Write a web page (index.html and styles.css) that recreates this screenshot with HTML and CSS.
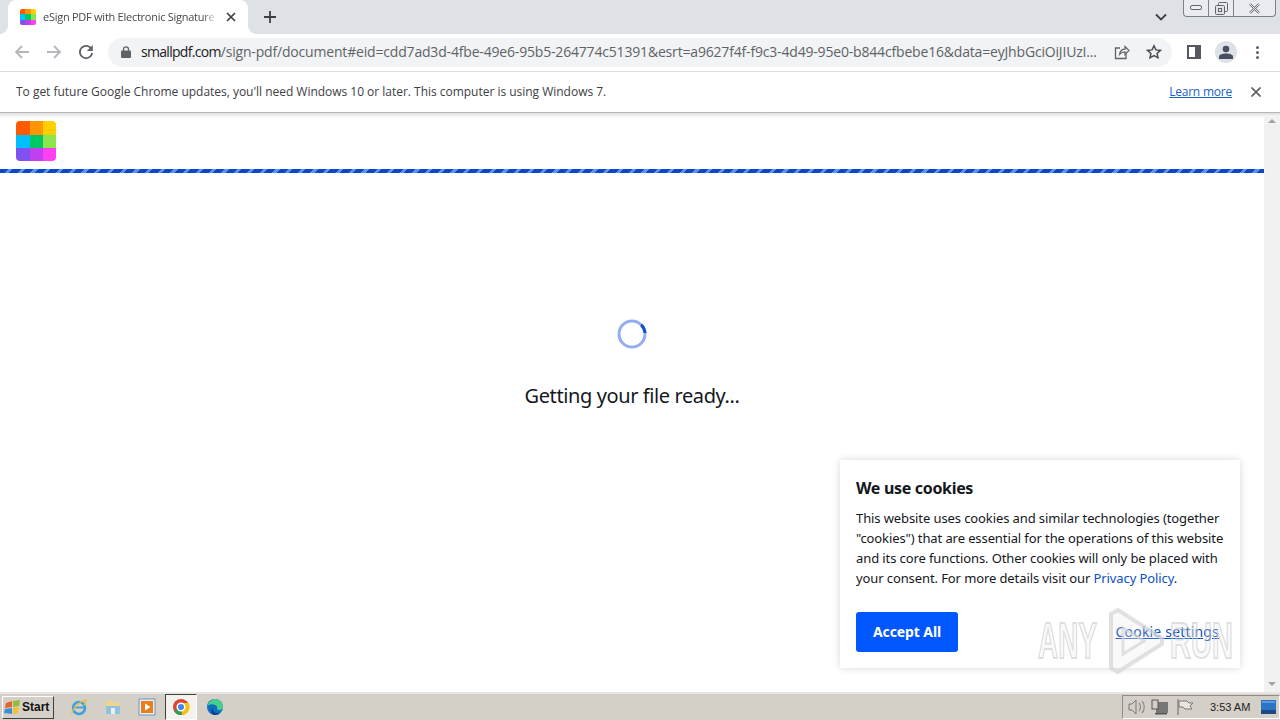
FILE: index.html
```html
<!DOCTYPE html>
<html lang="en">
<head>
<meta charset="utf-8">
<title>eSign PDF with Electronic Signature</title>
<link rel="stylesheet" href="styles.css">
</head>
<body>
<div class="screen">
  <div class="tabstrip">
    <div class="tab">
      <svg class="favicon" width="16" height="16" viewBox="0 0 3 3" shape-rendering="crispEdges"><rect width="1" height="1" fill="#ff5a00"/><rect x="1" width="1" height="1" fill="#ff9500"/><rect x="2" width="1" height="1" fill="#ffcf00"/><rect y="1" width="1" height="1" fill="#00bfff"/><rect x="1" y="1" width="1" height="1" fill="#00c864"/><rect x="2" y="1" width="1" height="1" fill="#8ce650"/><rect y="2" width="1" height="1" fill="#8050f0"/><rect x="1" y="2" width="1" height="1" fill="#c040f0"/><rect x="2" y="2" width="1" height="1" fill="#ff40f0"/></svg>
      <span class="tab-title">eSign PDF with Electronic Signature Free</span>
      <svg class="tab-close" width="10" height="10" viewBox="0 0 10 10"><path d="M1 1l8 8M9 1l-8 8" stroke="#3c4043" stroke-width="1.7"/></svg>
    </div>
    <svg class="newtab" width="14" height="14" viewBox="0 0 14 14"><path d="M7 1v12M1 7h12" stroke="#3c4043" stroke-width="1.8"/></svg>
    <div class="strip-spacer"></div>
    <svg class="tabs-menu" width="12" height="8" viewBox="0 0 12 8"><path d="M1 1.500l5 5 5-5" fill="none" stroke="#3c4043" stroke-width="1.8"/></svg>
    <div class="winbtns">
      <span class="winbtn w-min"><svg width="12" height="6" viewBox="0 0 12 6"><rect x=".5" y=".5" width="11" height="4" rx="1.500" fill="#eef0f3" stroke="#5f6670"/></svg></span>
      <span class="winbtn w-max"><svg width="13" height="13" viewBox="0 0 13 13"><rect x="3.500" y=".5" width="9" height="9" rx="1" fill="none" stroke="#5f6670"/><rect x=".5" y="3.500" width="9" height="9" rx="1" fill="#dee1e6" stroke="#5f6670"/><rect x="3.500" y="6.500" width="3" height="3" fill="none" stroke="#5f6670"/></svg></span>
      <span class="winbtn w-close"><svg width="13" height="11" viewBox="0 0 13 11"><path d="M2 1l9 9M11 1l-9 9" stroke="#6a7078" stroke-width="2.400"/><path d="M2 1l9 9M11 1l-9 9" stroke="#eef0f3" stroke-width="1"/></svg></span>
    </div>
  </div>

  <div class="toolbar">
    <svg class="nav" width="16" height="16" viewBox="0 0 16 16"><path d="M15 8H2M8 2L2 8l6 6" fill="none" stroke="#b4b7bb" stroke-width="1.8"/></svg>
    <svg class="nav" width="16" height="16" viewBox="0 0 16 16"><path d="M1 8h13M8 2l6 6-6 6" fill="none" stroke="#b4b7bb" stroke-width="1.8"/></svg>
    <svg class="nav" width="16" height="16" viewBox="0 0 16 16"><path d="M13.600 5.200A6.200 6.200 0 1 0 14.200 9" fill="none" stroke="#5f6368" stroke-width="1.8"/><path d="M14.800 1v6h-6z" fill="#5f6368"/></svg>
    <div class="omnibox">
      <svg class="lock" width="10" height="12" viewBox="0 0 10 12"><path d="M2.500 5V3.300a2.500 2.500 0 0 1 5 0V5" fill="none" stroke="#5f6368" stroke-width="1.3"/><rect y="4.600" width="10" height="7.400" rx="1" fill="#5f6368"/></svg>
      <div class="url"><span class="url-host">smallpdf.com</span><span class="url-rest">/sign-pdf/document#eid=cdd7ad3d-4fbe-49e6-95b5-264774c51391&amp;esrt=a9627f4f-f9c3-4d49-95e0-b844cfbebe16&amp;data=eyJhbGciOiJIUzI...</span></div>
      <svg class="omni-icon share" width="16" height="16" viewBox="0 0 16 16"><path d="M6 4H1.500v10.500H12V10" fill="none" stroke="#5f6368" stroke-width="1.3"/><path d="M5.500 10.500C6 7 8.500 5.200 11 5.200V2.500l4 4-4 4V7.800c-2.300 0-4 .8-5.500 2.700z" fill="none" stroke="#5f6368" stroke-width="1.200"/></svg>
      <svg class="omni-icon star" width="16" height="16" viewBox="0 0 16 16"><path d="M8 1.800l1.900 4.100 4.500.5-3.300 3 .9 4.400L8 11.600l-4 2.200.9-4.400-3.300-3 4.500-.5z" fill="none" stroke="#4a4e52" stroke-width="1.500"/></svg>
    </div>
    <div class="side-panel"></div>
    <div class="avatar"><svg width="14" height="14" viewBox="0 0 14 14"><circle cx="7" cy="4" r="3.300" fill="#474f63"/><path d="M0 14v-2.500C0 9.500 3.500 8.500 7 8.500s7 1 7 3V14z" fill="#474f63"/></svg></div>
    <div class="kebab"><i></i><i></i><i></i></div>
  </div>

  <div class="infobar">
    <span class="info-text">To get future Google Chrome updates, you'll need Windows 10 or later. This computer is using Windows 7.</span>
    <a class="learn" href="#">Learn more</a>
    <svg class="info-close" width="10" height="10" viewBox="0 0 10 10"><path d="M.5.500l9 9M9.500.500l-9 9" stroke="#5f6368" stroke-width="1.700"/></svg>
  </div>

  <div class="viewport">
    <main class="page">
      <header class="page-head">
        <svg class="logo" width="40" height="40" viewBox="0 0 40 40"><defs><clipPath id="logoclip"><rect width="40" height="40" rx="4"/></clipPath></defs><g clip-path="url(#logoclip)" shape-rendering="crispEdges"><rect width="14" height="14" fill="#ff5a00"/><rect x="14" width="13" height="14" fill="#ff9500"/><rect x="27" width="13" height="14" fill="#ffcf00"/><rect y="14" width="14" height="13" fill="#00bfff"/><rect x="14" y="14" width="13" height="13" fill="#00c864"/><rect x="27" y="14" width="13" height="13" fill="#8ce650"/><rect y="27" width="14" height="13" fill="#8050f0"/><rect x="14" y="27" width="13" height="13" fill="#c040f0"/><rect x="27" y="27" width="13" height="13" fill="#ff40f0"/></g></svg>
      </header>
      <div class="progress"></div>
      <section class="loading">
        <svg class="spinner" width="30" height="30" viewBox="0 0 30 30"><circle cx="15" cy="15" r="13" fill="none" stroke="#92aef0" stroke-width="3"/><path d="M24.200 5.800A13 13 0 0 1 28 14" fill="none" stroke="#0a4fd8" stroke-width="3"/></svg>
        <p class="loading-text">Getting your file ready...</p>
      </section>
    </main>
    <div class="scrollbar">
      <svg width="16" height="16" viewBox="0 0 16 16"><path d="M4 10l4-4 4 4z" fill="#a3a3a3"/></svg>
      <svg width="16" height="16" viewBox="0 0 16 16"><path d="M4 6l4 4 4-4z" fill="#a3a3a3"/></svg>
    </div>
    <aside class="cookie">
      <h2 class="cookie-title">We use cookies</h2>
      <p class="cookie-body">This website uses cookies and similar technologies (together "cookies") that are essential for the operations of this website and its core functions. Other cookies will only be placed with your consent. For more details visit our <a href="#">Privacy Policy</a>.</p>
      <div class="cookie-actions">
        <button class="accept">Accept All</button>
        <a class="settings" href="#">Cookie settings</a>
      </div>
    </aside>
    <div class="watermark">
      <span class="wm-any">ANY</span>
      <svg class="wm-logo" width="56" height="66" viewBox="0 0 56 66"><path d="M3 6v54l7 4 44-28v-6L10 2z" fill="#dcdcdc" fill-opacity=".18" stroke="#d4d4d4" stroke-width="4" stroke-opacity=".7"/><path d="M15 20v26l21-13z" fill="#fff" fill-opacity=".2" stroke="#d4d4d4" stroke-width="3" stroke-opacity=".7"/></svg>
      <span class="wm-run">RUN</span>
    </div>
  </div>

  <footer class="taskbar">
    <button class="start">
      <svg width="18" height="18" viewBox="0 0 18 18"><path d="M2 5l6-2v6l-7 1z" fill="#e8632c"/><path d="M9 3l7-1-1 6-6 1z" fill="#8fbf3a"/><path d="M1 11l7-1v6l-8-1z" fill="#3a8fd8"/><path d="M9 10l6-1-1 6-5 1z" fill="#f2c230"/></svg>
      <span>Start</span>
    </button>
    <div class="quick">
      <span class="qi"><svg width="18" height="18" viewBox="0 0 18 18"><circle cx="9" cy="10" r="6" fill="none" stroke="#3f9fdc" stroke-width="2.500"/><path d="M4 9.500h10" stroke="#3f9fdc" stroke-width="1.800"/><path d="M2 16C1 13 9 3 16 2c1 1-1 4-2 5" fill="none" stroke="#e6c04a" stroke-width="1.300"/></svg></span>
      <span class="qi"><svg width="18" height="18" viewBox="0 0 18 18"><path d="M2 3h6l1 2h7v11H2z" fill="#f0d48a"/><rect x="2" y="8" width="14" height="8" fill="#8fc3dc"/><rect x="7" y="10" width="4" height="6" fill="#e8eef2"/></svg></span>
      <span class="qi"><svg width="18" height="18" viewBox="0 0 18 18"><rect x="1" y="1" width="16" height="16" fill="#e8eef5" stroke="#6f93bd"/><rect x="3" y="3" width="12" height="12" fill="#e87e1c"/><path d="M7 5.500v7l5.500-3.500z" fill="#fff"/></svg></span>
      <span class="qi qi-active"><svg width="18" height="18" viewBox="0 0 18 18"><circle cx="9" cy="9" r="8" fill="#db4437"/><path d="M9 9L2 13a8 8 0 0 0 8 4z" fill="#2e9e4f"/><path d="M9 5h7.600a8 8 0 0 1-6.600 12z" fill="#f5c20d"/><circle cx="9" cy="9" r="3.800" fill="#4285f4" stroke="#fff" stroke-width="1.500"/></svg></span>
      <span class="qi"><svg width="18" height="18" viewBox="0 0 18 18"><circle cx="9" cy="9" r="8" fill="#0c6fc0"/><path d="M1.500 8C3 3 7 1 9 1c4 0 8 3 8 8 0 2-2 3.500-4.500 3-2-.4-1-2-1.500-3.500C10 6 4 5 1.500 8z" fill="#48d08a"/><path d="M9 17c-4 0-5-5-2-7-.5 3 2 6 7 5-1 1-3 2-5 2z" fill="#0a3f8c"/></svg></span>
    </div>
    <div class="tray">
      <svg width="18" height="16" viewBox="0 0 18 16"><path d="M1 5h3l4-4v14l-4-4H1z" fill="#d4d0c8" stroke="#777"/><path d="M11 4c2 2 2 6 0 8M14 2c3 3 3 9 0 12" fill="none" stroke="#8a8a8a" stroke-width="1.200"/></svg>
      <svg width="18" height="16" viewBox="0 0 18 16"><rect x="5" y="3" width="12" height="11" fill="#777"/><rect x="1" y="1" width="6" height="9" fill="#d4d0c8" stroke="#555"/><rect x="4" y="14" width="12" height="1.500" fill="#555"/></svg>
      <svg class="tray-flag" width="18" height="16" viewBox="0 0 18 16"><path d="M2 0v16" stroke="#777" stroke-width="1.200"/><path d="M3 2h8l2 2h4l-3 3 2 3H9l-2-2H3z" fill="#e8e5df" stroke="#777"/></svg>
      <span class="clock">3:53 AM</span>
      <svg class="desk" width="15" height="14" viewBox="0 0 15 14"><rect width="15" height="14" fill="#2f74c4"/><rect y="10" width="15" height="4" fill="#1c4a86"/><rect x="1" y="1" width="13" height="2" fill="#5a9ae0"/></svg>
    </div>
  </footer>
</div>
</body>
</html>
```

FILE: styles.css
```css
* { box-sizing: border-box; }
html, body { margin: 0; padding: 0; }
body { width: 1280px; height: 720px; overflow: hidden; background: #fff; font-family: "Open Sans", "Noto Sans", sans-serif; }
.screen { width: 1280px; height: 720px; display: flex; flex-direction: column; }

.tabstrip { height: 34px; flex: none; background: #dee1e6; display: flex; align-items: flex-start; padding-left: 8px; }
.tab { position: relative; width: 240px; height: 34px; background: #fff; border-radius: 8px 8px 0 0; display: flex; align-items: center; padding: 0 12px; }
.tab::before, .tab::after { content: ""; position: absolute; bottom: 0; width: 8px; height: 8px; }
.tab::before { left: -8px; background: radial-gradient(circle at 0 0, transparent 7.500px, #fff 8px); }
.tab::after { right: -8px; background: radial-gradient(circle at 100% 0, transparent 7.500px, #fff 8px); }
.favicon { flex: none; border-radius: 2px; }
.tab-title { flex: 1; margin-left: 7px; font: 11px/16px "Open Sans", sans-serif; letter-spacing: -.26px; color: #45484c; white-space: nowrap; overflow: hidden; -webkit-mask-image: linear-gradient(90deg, #000 92%, transparent); mask-image: linear-gradient(90deg, #000 92%, transparent); }
.tab-close { flex: none; margin-left: 9px; }
.newtab { margin: 10px 0 0 15px; flex: none; }
.strip-spacer { flex: 1; }
.tabs-menu { flex: none; margin: 13px 16px 0 0; }
.winbtns { flex: none; display: flex; height: 17px; margin-right: 4px; border: 1px solid #7d8288; border-top: 0; border-radius: 0 0 4px 4px; background: #e9ebee; }
.winbtn { display: flex; align-items: center; justify-content: center; height: 16px; border-right: 1px solid #7d8288; }
.winbtn svg { display: block; }
.w-min { width: 25px; }
.w-max { width: 25px; }
.w-close { width: 41px; border-right: 0; }

.toolbar { height: 38px; flex: none; background: #fff; border-bottom: 1px solid #dadce0; display: flex; align-items: center; padding: 0 14px 1px; }
.nav { flex: none; margin-right: 16px; }
.omnibox { flex: none; width: 1064px; height: 29px; margin-left: -2px; background: #f1f3f4; border-radius: 15px; display: flex; align-items: center; padding: 0 10px 0 13px; }
.lock { flex: none; }
.url { flex: 1; width: 0; margin-left: 10px; font: 14px/20px "Open Sans", sans-serif; white-space: nowrap; overflow: hidden; }
.url-host { color: #202124; letter-spacing: -.7px; }
.url-rest { color: #5f6368; letter-spacing: -.18px; }
.omni-icon { flex: none; margin-left: 16px; }
.share { margin-left: 16px; transform: translateX(-1px); }
.star { margin-left: 15px; }
.side-panel { flex: none; width: 14px; height: 14px; margin-left: 15px; border: 2px solid #55585c; border-right-width: 6px; background: #fff; }
.avatar { flex: none; width: 22px; height: 22px; margin-left: 14px; border-radius: 50%; background: #dee1e6; display: flex; align-items: center; justify-content: center; }
.kebab { flex: none; width: 4px; margin-left: 18px; display: flex; flex-direction: column; gap: 2px; align-items: center; }
.kebab i { display: block; width: 3px; height: 3px; border-radius: 50%; background: #5f6368; }

.infobar { height: 41px; flex: none; background: #fff; border-bottom: 1px solid #b6b6b6; display: flex; align-items: center; padding: 0 19px 0 16px; }
.info-text { flex: 1; font: 12px/16px "Open Sans", sans-serif; letter-spacing: -.02px; color: #3c4043; }
.learn { font: 12px/16px "Open Sans", sans-serif; letter-spacing: -.22px; color: #1a62c5; }
.info-close { flex: none; margin-left: 19px; }

.viewport { flex: 1; min-height: 0; position: relative; display: flex; background: #fff; }
.viewport::before { content: ""; position: absolute; left: 0; right: 0; top: 0; height: 5px; background: linear-gradient(#dedede, #f4f4f4 3px, transparent); z-index: 1; }
.page { flex: 1; min-width: 0; display: flex; flex-direction: column; }
.page-head { height: 56px; flex: none; padding: 8px 16px 0; }
.logo { display: block; }
.progress { height: 4px; flex: none; background: repeating-linear-gradient(135deg, #0a47c9 0 6px, #5c93f2 6px 9px); }
.loading { display: flex; flex-direction: column; align-items: center; padding-top: 146px; }
.spinner { display: block; }
.loading-text { margin: 32px 0 0; font: 20px/30px "Noto Sans", sans-serif; color: #14171c; letter-spacing: -.4px; }
.scrollbar { flex: none; width: 16px; background: #f1f1f1; display: flex; flex-direction: column; justify-content: space-between; }
.scrollbar svg { display: block; }

.cookie { position: absolute; left: 840px; top: 347px; width: 400px; height: 208px; background: #fff; box-shadow: 0 0 8px rgba(0,0,0,.16); padding: 16px; }
.cookie-title { margin: 0; font: 700 16px/24px "Noto Sans", sans-serif; color: #14171c; letter-spacing: -.32px; }
.cookie-body { margin: 8px 0 0; font: 13px/20px "Noto Sans", sans-serif; color: #14171c; letter-spacing: -.1px; }
.cookie-body a { color: #0b4fc4; text-decoration: none; }
.cookie-actions { display: flex; align-items: center; justify-content: space-between; margin-top: 24px; padding-right: 5px; }
.accept { width: 102px; height: 40px; border: 0; border-radius: 3px; background: #0057ff; color: #fff; font: 700 14px/20px "Noto Sans", sans-serif; letter-spacing: -.1px; }
.settings { font: 14px/20px "Noto Sans", sans-serif; color: #0b4fc4; letter-spacing: .18px; }

.watermark { position: absolute; left: 1038px; top: 495px; width: 196px; height: 66px; display: flex; align-items: center; pointer-events: none; }
.watermark span { flex: none; width: 62px; transform-origin: left center; font: 700 50px/60px "Liberation Sans", sans-serif; color: rgba(220,220,220,.18); -webkit-text-stroke: 2px rgba(210,210,210,.7); white-space: nowrap; }
.wm-any { transform: scaleX(.56); }
.wm-run { transform: scaleX(.58); margin-left: 6px; }
.wm-logo { flex: none; margin-left: 8px; }

.taskbar { height: 28px; flex: none; background: #d4d0c8; border-top: 2px solid #e8e6e1; display: flex; align-items: center; }
.start { margin-left: 2px; width: 52px; height: 23px; padding: 0 0 0 1px; background: #d4d0c8; border: 1px solid; border-color: #fff #404040 #404040 #fff; display: flex; align-items: center; font: 700 12px/16px "Liberation Sans", sans-serif; color: #111; }
.quick { display: flex; align-items: center; margin-left: 8px; }
.qi { width: 34px; height: 26px; display: flex; align-items: center; justify-content: center; }
.qi-active { width: 32px; margin: 0 1px; background: #f4f2ee; border: 1px solid; border-color: #404040 #fff #fff #404040; }
.tray { margin-left: auto; width: 158px; height: 24px; display: flex; align-items: center; padding-left: 5px; gap: 5px; border: 1px solid; border-color: #8f8d88 #fff #fff #8f8d88; }
.tray-flag { margin-left: 2px; }
.clock { font: 11px/14px "Liberation Sans", sans-serif; color: #222; margin-left: 11px; white-space: nowrap; }
.desk { flex: none; margin-left: 6px; }
```
